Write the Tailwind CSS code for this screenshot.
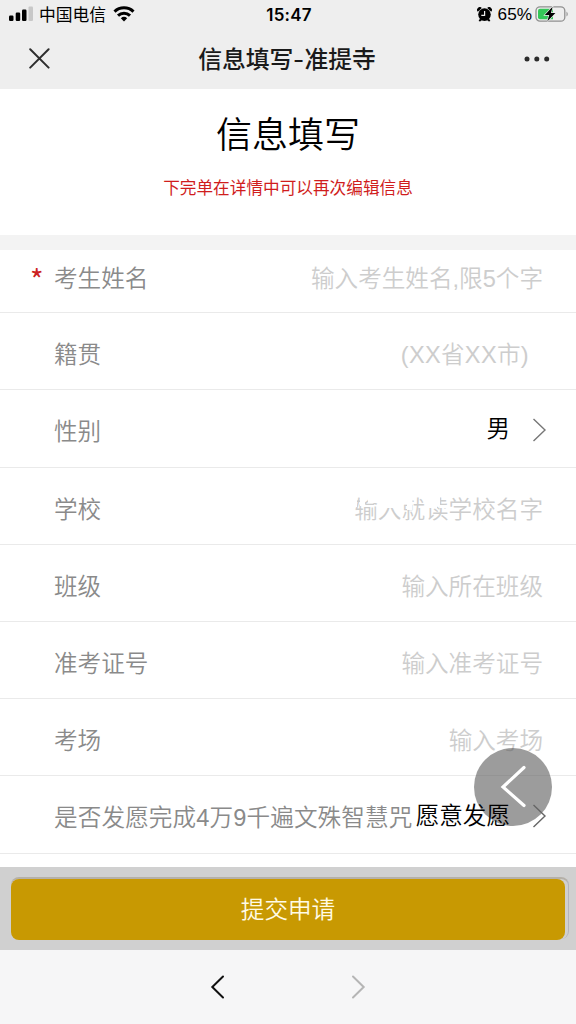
<!DOCTYPE html>
<html lang="zh-CN">
<head>
<meta charset="utf-8">
<title>信息填写-准提寺</title>
<script src="https://cdn.jsdelivr.net/npm/@tailwindcss/browser@4"></script>
</head>
<body class="w-[576px] h-[1024px] overflow-hidden bg-white font-['Liberation_Sans','Noto_Sans_CJK_SC',sans-serif]">
<div class="relative flex flex-col w-[576px] h-[1024px]">
  <header class="h-[89px] shrink-0 bg-[#eeeeee] flex flex-col">
    <div class="h-[29px] grid grid-cols-3 items-center pl-[9px] pr-[7px] text-black">
      <div class="flex items-center">
        <svg class="mb-0.5 w-6 h-4" viewBox="0 0 24 16"><g fill="#000"><rect x="0" y="9.5" width="4.5" height="5.5" rx="1.2"/><rect x="6.7" y="6.5" width="4.5" height="8.5" rx="1.2"/><rect x="13" y="3.5" width="4.5" height="11.5" rx="1.2"/></g><rect x="19.5" y="0.5" width="4.5" height="14.5" rx="1" fill="#c8c8c8"/></svg>
        <span class="ml-1.5 pt-0.5 text-[16.8px] leading-[27px] whitespace-nowrap">中国电信</span>
        <svg class="ml-[7px] mb-px w-[22px] h-4" viewBox="0 0 22 16"><g fill="none" stroke="#000" stroke-width="3"><path d="M1.5 5.6A13.8 13.8 0 0 1 20.5 5.6"/><path d="M5 9.6A8.7 8.7 0 0 1 17 9.6"/></g><path d="M7.8 12.2A4.7 4.7 0 0 1 14.2 12.2L11 15.6Z"/></svg>
      </div>
      <div class="text-center pt-0.5 text-[17px] leading-[27px] font-semibold font-['Inter',sans-serif] tracking-[0.2px]">15:47</div>
      <div class="flex items-center justify-end">
        <svg class="mr-0.5 w-[15px] h-[15px]" viewBox="0 0 15 15"><circle cx="7.5" cy="7.6" r="6.3"/><path d="M0.8 4.8A2.5 2.5 0 0 1 4.8 1ZM14.2 4.8A2.5 2.5 0 0 0 10.2 1ZM3 11.5l-1.4 2.5 1.5.6 2-1.6ZM12 11.5l1.4 2.5-1.5.6-2-1.6Z"/><path d="M7.6 4v4.3H4.3" fill="none" stroke="#eee" stroke-width="1.2"/></svg>
        <span class="ml-[4px] text-[17.2px] leading-[29px]">65%</span>
        <svg class="ml-[3px] mb-[2px] w-[34px] h-[18px]" viewBox="0 0 34 18"><rect x="1" y="1.8" width="28.8" height="14.4" rx="4" fill="none" stroke="#909090" stroke-width="1.3"/><path d="M31.5 6.4Q34 9 31.5 11.6Z" fill="#909090"/><path d="M5 3.8H18V14.2H5Q3 14.2 3 12.2V5.8Q3 3.8 5 3.8Z" fill="#35c759"/><path d="M17.6 1.8L9.8 10h4.4l-1.8 6.2L20.4 8H16Z" fill="#000" stroke="#eee" stroke-width="1.3" paint-order="stroke"/></svg>
      </div>
    </div>
    <div class="h-[60px] grid grid-cols-[90px_1fr_90px] items-center">
      <svg class="ml-[29px] mb-0.5 w-[21px] h-[21px]" viewBox="0 0 21 21"><path d="M1.2 1.2L19.6 19.6M19.6 1.2L1.2 19.6" fill="none" stroke="#2e2e2e" stroke-width="2" stroke-linecap="round"/></svg>
      <h1 class="pr-0.5 pb-[3px] text-center text-[23.8px] leading-[57px] font-medium text-[#1a1a1a] font-['Noto_Sans_CJK_SC',sans-serif]">信息填写<span class="inline-block w-[11px] scale-x-125">-</span>准提寺</h1>
      <svg class="ml-[38px] w-[26px] h-1.5" viewBox="0 0 26 6" fill="#2b2b2b"><circle cx="3" cy="3" r="2.5"/><circle cx="12.8" cy="3" r="2.5"/><circle cx="22.7" cy="3" r="2.5"/></svg>
    </div>
  </header>

  <section class="h-[146px] shrink-0 flex flex-col items-center pt-[23px]">
    <h2 class="text-[36px] leading-[48px] font-[350] text-black">信息填写</h2>
    <p class="mt-[17px] text-[16.65px] leading-6 text-[#d01d1d]">下完单在详情中可以再次编辑信息</p>
  </section>
  <div class="h-[15px] shrink-0 bg-[#f3f3f3]"></div>

  <main class="h-[617px] shrink-0 text-[23.6px] leading-[30px] font-[350] text-[#8a8a8a] whitespace-nowrap">
    <div class="h-[63px] flex items-center border-b border-[#eaeaea] pl-[30px] pr-[33px] pb-[5px]">
      <span class="w-6 text-[#cc2222] text-[29px] leading-[28px] pb-0.5 font-normal font-['Noto_Sans_CJK_SC',sans-serif]">*</span><span>考生姓名</span><span class="ml-auto text-[#cdcdcd]">输入考生姓名,限5个字</span>
    </div>
    <div class="h-[77px] flex items-center border-b border-[#eaeaea] pl-[54px] pr-[47px] pt-[7px]">
      <span>籍贯</span><span class="ml-auto text-[#cdcdcd] tracking-[0.3px]">(XX省XX市)</span>
    </div>
    <div class="h-[78px] flex items-center border-b border-[#eaeaea] pl-[54px] pr-[29px] pt-[7px]">
      <span>性别</span><span class="ml-auto mb-[6px] text-black">男</span>
      <svg class="ml-[22px] mb-1 w-[15px] h-6" viewBox="0 0 15 24"><path d="M1.5 1L13 12L1.5 23" fill="none" stroke="#777" stroke-width="1.4"/></svg>
    </div>
    <div class="h-[77px] flex items-center border-b border-[#eaeaea] pl-[54px] pr-[33px] pt-[7px]">
      <span>学校</span>
      <span class="relative ml-auto text-[#cdcdcd]">输入就读学校名字
        <svg class="absolute left-0 top-0 w-[95px] h-[30px]" viewBox="0 0 95 30" fill="#fff"><path d="M0 0H3V12H0ZM6 0H11V11H6ZM14 0H24V8H14ZM24 0H47V13H24ZM47 0H58.5V9H47ZM53 9H58.5V15H53ZM71 0H83V13H71ZM83 0H86V10H83ZM86 10H95V13H86Z"/></svg>
      </span>
    </div>
    <div class="h-[77px] flex items-center border-b border-[#eaeaea] pl-[54px] pr-[33px] pt-[7px]">
      <span>班级</span><span class="ml-auto text-[#cdcdcd]">输入所在班级</span>
    </div>
    <div class="h-[77px] flex items-center border-b border-[#eaeaea] pl-[54px] pr-[33px] pt-[7px]">
      <span>准考证号</span><span class="ml-auto text-[#cdcdcd]">输入准考证号</span>
    </div>
    <div class="h-[77px] flex items-center border-b border-[#eaeaea] pl-[54px] pr-[33px] pt-[7px]">
      <span>考场</span><span class="ml-auto text-[#cdcdcd]">输入考场</span>
    </div>
    <div class="h-[78px] flex items-center border-b border-[#eaeaea] pl-[54px] pr-[29px] pt-[7px]">
      <span class="tracking-[0.12px]">是否发愿完成4万9千遍文殊智慧咒</span><span class="relative z-20 ml-auto mb-[5px] text-black">愿意发愿</span>
      <svg class="relative z-20 ml-[22px] mb-1 w-[15px] h-6" viewBox="0 0 15 24"><path d="M1.5 1L13 12L1.5 23" fill="none" stroke="#666" stroke-width="1.4"/></svg>
    </div>
  </main>

  <div class="h-[83px] shrink-0 bg-[#d0d0d0] pt-[10px] pl-[11px] pr-[6px]">
    <div class="h-[62px] w-[558px] rounded-lg border-t-2 border-r border-t-[#b5b0a8] border-r-[#b4b4bc]">
      <button class="block w-[554px] h-[61px] rounded-lg bg-[#c89902] text-[#fffbe6] text-[23.6px] leading-[59px] pt-0.5 font-[350]">提交申请</button>
    </div>
  </div>

  <nav class="flex-1 bg-[#f6f6f7] flex items-center pl-[210px] gap-[126px]">
    <svg class="w-[15px] h-6" viewBox="0 0 15 24"><path d="M13 1.5L2.3 12L13 22.5" fill="none" stroke="#111" stroke-width="2" stroke-linecap="round"/></svg>
    <svg class="w-[15px] h-6" viewBox="0 0 15 24"><path d="M2 1.5L12.7 12L2 22.5" fill="none" stroke="#b5b5b5" stroke-width="2" stroke-linecap="round"/></svg>
  </nav>

  <div class="absolute z-10 left-[474px] top-[748px] w-[78px] h-[78px] rounded-full bg-[#5a5a5a]/60">
    <svg class="w-[78px] h-[78px]" viewBox="0 0 78 78"><path d="M50 19.5L29 39L50 57.5" fill="none" stroke="#fff" stroke-width="3.2" stroke-linecap="round"/></svg>
  </div>
</div>
</body>
</html>
